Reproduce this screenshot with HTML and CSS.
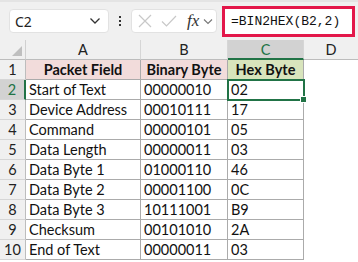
FILE: index.html
```html
<!DOCTYPE html>
<html lang="en">

<head>
    <meta charset="UTF-8">
    <link rel="stylesheet" href="styles.css">
    <title>BIN2HEX</title>
</head>

<body>
    <div class="toolbar">
        <div class="namebox">
            <span>C2</span>
            <svg width="12" height="8" viewBox="0 0 12 8"><path d="M1.5 1.5 L6 6 L10.5 1.5" fill="none" stroke="#333" stroke-width="1.3"/></svg>
        </div>
        <div class="dots"><i></i><i></i><i></i></div>
        <div class="fxbox">
            <svg width="16" height="16" viewBox="0 0 16 16"><path d="M2 2 L14 14 M14 2 L2 14" stroke="#c8c8c8" stroke-width="1.2"/></svg>
            <svg width="16" height="16" viewBox="0 0 16 16"><path d="M1 8.5 L5.5 13 L15 3" fill="none" stroke="#c8c8c8" stroke-width="1.2"/></svg>
            <span class="fx">fx</span>
            <svg width="10" height="7" viewBox="0 0 10 7"><path d="M1 1.5 L5 5.5 L9 1.5" fill="none" stroke="#777" stroke-width="1.1"/></svg>
        </div>
        <div class="formula">=BIN2HEX(B2,2)</div>
    </div>

    <div class="sheet">
        <div class="corner"><span class="tri"></span></div>
        <div class="colhead">A</div>
        <div class="colhead">B</div>
        <div class="colhead active">C</div>
        <div class="colhead last">D</div>

        <div class="rowhead">1</div>
        <div class="cell title pink">Packet Field</div>
        <div class="cell title pink">Binary Byte</div>
        <div class="cell title green">Hex Byte</div>
        <div class="blank"></div>

        <div class="rowhead active">2</div>
        <div class="cell">Start of Text</div>
        <div class="cell">00000010</div>
        <div class="cell selected">02<span class="handle"></span></div>
        <div class="blank"></div>

        <div class="rowhead">3</div>
        <div class="cell">Device Address</div>
        <div class="cell">00010111</div>
        <div class="cell">17</div>
        <div class="blank"></div>

        <div class="rowhead">4</div>
        <div class="cell">Command</div>
        <div class="cell">00000101</div>
        <div class="cell">05</div>
        <div class="blank"></div>

        <div class="rowhead">5</div>
        <div class="cell">Data Length</div>
        <div class="cell">00000011</div>
        <div class="cell">03</div>
        <div class="blank"></div>

        <div class="rowhead">6</div>
        <div class="cell">Data Byte 1</div>
        <div class="cell">01000110</div>
        <div class="cell">46</div>
        <div class="blank"></div>

        <div class="rowhead">7</div>
        <div class="cell">Data Byte 2</div>
        <div class="cell">00001100</div>
        <div class="cell">0C</div>
        <div class="blank"></div>

        <div class="rowhead">8</div>
        <div class="cell">Data Byte 3</div>
        <div class="cell">10111001</div>
        <div class="cell">B9</div>
        <div class="blank"></div>

        <div class="rowhead">9</div>
        <div class="cell">Checksum</div>
        <div class="cell">00101010</div>
        <div class="cell">2A</div>
        <div class="blank"></div>

        <div class="rowhead">10</div>
        <div class="cell">End of Text</div>
        <div class="cell">00000011</div>
        <div class="cell">03</div>
        <div class="blank"></div>
    </div>
</body>

</html>
```

FILE: styles.css
```css
body {
    margin: 0;
    font-family: Lato, "Liberation Sans", sans-serif;
    background-color: #fff;
    width: 358px;
    height: 262px;
    overflow: hidden;
}

.toolbar {
    height: 40px;
    box-sizing: border-box;
    background-color: #f0f0f0;
    border-top: 2px solid #e4e4e4;
    display: flex;
    align-items: center;
    padding-left: 9px;
}

.namebox {
    width: 100px;
    height: 24px;
    box-sizing: border-box;
    background-color: #fff;
    border: 1px solid #e2e2e2;
    border-radius: 4px;
    display: flex;
    align-items: center;
    justify-content: space-between;
    padding: 0 7px 0 5px;
    font-family: "Noto Sans", sans-serif;
    font-size: 14px;
    color: #222;
}

.dots {
    width: 22px;
    display: flex;
    flex-direction: column;
    align-items: center;
    gap: 2px;
}

.dots i {
    width: 2px;
    height: 2px;
    background-color: #333;
}

.fxbox {
    width: 86px;
    height: 24px;
    box-sizing: border-box;
    background-color: #fff;
    border: 1px solid #e2e2e2;
    border-radius: 4px;
    display: flex;
    align-items: center;
    gap: 8px;
    padding-left: 5px;
}

.fx {
    font-family: "Liberation Serif", serif;
    font-style: italic;
    font-size: 17px;
    color: #333;
    margin-left: 2px;
    margin-right: -4px;
}

.formula {
    margin-left: 5px;
    width: 133px;
    height: 31px;
    box-sizing: border-box;
    border: 3px solid #e3174a;
    background-color: #fff;
    font-family: "Liberation Mono", monospace;
    font-size: 13px;
    color: #111;
    display: flex;
    align-items: center;
    padding-left: 6px;
}

.sheet {
    display: grid;
    grid-template-columns: 26px 115px 87px 76px 1fr;
    grid-auto-rows: 20px;
    font-size: 14.5px;
    color: #111;
}

.corner,
.colhead,
.rowhead {
    background-color: #f0f0f0;
    box-sizing: border-box;
    display: flex;
    align-items: center;
    justify-content: center;
    color: #222;
}

.corner {
    border-right: 1px solid #d0d0d0;
    border-bottom: 1px solid #bdbdbd;
    position: relative;
}

.tri {
    position: absolute;
    right: 3px;
    bottom: 3px;
    width: 0;
    height: 0;
    border-left: 10px solid transparent;
    border-bottom: 10px solid #bfbfbf;
}

.colhead {
    border-right: 1px solid #d6d6d6;
    border-bottom: 1px solid #bdbdbd;
}

.colhead.last {
    border-right: none;
}

.colhead.active {
    background-color: #d2d2d2;
    color: #217346;
    border-bottom: 2px solid #217346;
}

.rowhead {
    border-right: 1px solid #bdbdbd;
    border-bottom: 1px solid #d6d6d6;
}

.rowhead.active {
    background-color: #d2d2d2;
    color: #217346;
    border-right: 2px solid #217346;
}

.cell {
    box-sizing: border-box;
    border-right: 1px solid #ababab;
    border-bottom: 1px solid #ababab;
    padding-left: 3px;
    display: flex;
    align-items: center;
    white-space: nowrap;
    overflow: hidden;
}

.cell.title {
    font-weight: bold;
    justify-content: center;
    padding-left: 0;
}

.pink {
    background-color: #f2dcdb;
}

.green {
    background-color: #d8e4bc;
}

.selected {
    position: relative;
    overflow: visible;
    outline: 2px solid #217346;
    outline-offset: -1px;
}

.handle {
    position: absolute;
    right: -4px;
    bottom: -4px;
    width: 5px;
    height: 5px;
    background-color: #217346;
    border: 1px solid #fff;
}
```
